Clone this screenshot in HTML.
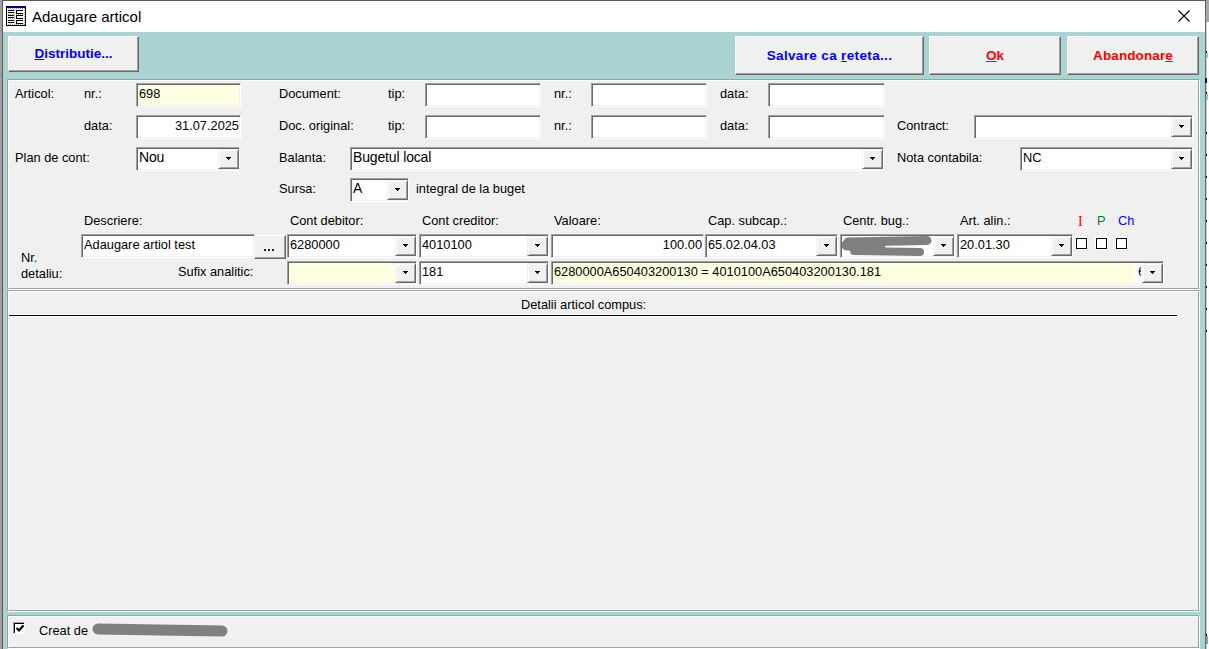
<!DOCTYPE html>
<html><head><meta charset="utf-8">
<style>
*{box-sizing:border-box;margin:0;padding:0}
html,body{width:1209px;height:649px;overflow:hidden}
body{position:relative;background:#f0f0f0;font-family:"Liberation Sans",sans-serif;color:#000}
.a{position:absolute}
.t{position:absolute;font-size:12.8px;line-height:15px;white-space:nowrap}
.ed{position:absolute;background:#fff;border:1px solid;border-color:#a0a0a0 #fff #fff #a0a0a0;box-shadow:inset 1px 1px #696969,inset -1px -1px #f0f0f0;height:24px;overflow:hidden}
.ed .v{position:absolute;left:2px;top:2px;font-size:12.8px;line-height:15px;white-space:nowrap}
.ed .vr{position:absolute;right:1px;top:2px;font-size:12.8px;line-height:15px;white-space:nowrap}
.y{background:#ffffe1}
.ed .vc{font-size:14px;top:2px;letter-spacing:-0.15px}
.bt{position:absolute;right:0;top:1px;bottom:1px;width:21px;background:#f0f0f0;border:1px solid;border-color:#f0f0f0 #696969 #696969 #f0f0f0;box-shadow:inset 1px 1px #fff,inset -1px -1px #a0a0a0}
.bt svg{position:absolute;left:7px;top:7px}
.pb{position:absolute;background:#f0f0f0;border:1px solid;border-color:#fff #696969 #696969 #fff;box-shadow:inset -1px -1px #a0a0a0;font-weight:bold;font-size:13.5px;text-align:center;white-space:nowrap}
.pnl{position:absolute;left:7px;width:1193px;border:1px solid;border-color:#a0a0a0 #fff #fff #a0a0a0;background:#f0f0f0}
.pnl>i{position:absolute;left:0;top:0;right:0;bottom:0;border:1px solid;border-color:#fff #a0a0a0 #a0a0a0 #fff}
.ck{position:absolute;width:13px;height:13px;background:#fff;border:1px solid #fff;box-shadow:inset 0 0 0 1px #000}
u{text-decoration:underline;text-underline-offset:1px;text-decoration-thickness:1px}
</style></head><body>
<!-- window frame -->
<div class="a" style="left:0;top:0;width:1205px;height:649px;background:#a0a0a0"></div>
<div class="a" style="left:2px;top:0;width:1204px;height:649px;background:#5a5a5a"></div>
<div class="a" style="left:3px;top:1px;width:1202px;height:31px;background:#fff"></div>
<div class="a" style="left:3px;top:32px;width:1202px;height:617px;background:#aad4d2"></div>
<div class="a" style="left:1206px;top:0;width:3px;height:22px;background:#a8a8a8"></div>
<div class="a" style="left:1206px;top:22px;width:3px;height:627px;background:#fff"></div><div class="a" style="left:1206px;top:22px;width:1px;height:627px;background:#d0d0d0"></div><div class="a" style="left:1205px;top:14px;width:1px;height:635px;background:#69696f"></div>
<div class="a" style="left:1206px;top:132px;width:1px;height:2px;background:#000"></div><div class="a" style="left:1206px;top:154px;width:1px;height:2px;background:#000"></div><div class="a" style="left:1206px;top:176px;width:1px;height:2px;background:#000"></div><div class="a" style="left:1206px;top:198px;width:1px;height:2px;background:#000"></div><div class="a" style="left:1206px;top:220px;width:1px;height:2px;background:#000"></div><div class="a" style="left:1206px;top:242px;width:1px;height:2px;background:#000"></div><div class="a" style="left:1206px;top:264px;width:1px;height:2px;background:#000"></div><div class="a" style="left:1206px;top:286px;width:1px;height:2px;background:#000"></div><div class="a" style="left:1206px;top:308px;width:1px;height:2px;background:#000"></div><div class="a" style="left:1206px;top:330px;width:1px;height:2px;background:#000"></div><div class="a" style="left:1206px;top:51px;width:1px;height:2px;background:#000"></div><div class="a" style="left:1206px;top:53px;width:2px;height:5px;background:#9cc"></div><div class="a" style="left:1205px;top:78px;width:2px;height:5px;background:#0000c0"></div><div class="a" style="left:1206px;top:92px;width:1px;height:2px;background:#000"></div><div class="a" style="left:1206px;top:94px;width:2px;height:6px;background:#9cc"></div>
<div class="a" style="left:1206px;top:634px;width:1px;height:2px;background:#000"></div><div class="a" style="left:1206px;top:636px;width:2px;height:8px;background:#7aa"></div>
<!-- title -->
<svg class="a" style="left:6px;top:6px" width="20" height="20" viewBox="0 0 20 20" shape-rendering="crispEdges">
<defs><pattern id="dz" width="2" height="2" patternUnits="userSpaceOnUse"><rect width="2" height="2" fill="#fff"/><rect width="1" height="1" fill="#999"/><rect x="1" y="1" width="1" height="1" fill="#e0e0e0"/></pattern></defs>
<rect x="0" y="0" width="20" height="20" fill="#000"/><rect x="1" y="2" width="18" height="17" fill="url(#dz)"/><rect x="0" y="0" width="20" height="2" fill="#000080"/>
<path d="M2 4h6v3H2zM2 9h6v3H2zM2 14h6v3H2zM10 4h7v4h-7zM10 9h7v4h-7zM10 14h7v4h-7z" fill="#fff"/>
<path d="M2 4h6v1H2zM2 6h6v1H2zM2 9h6v1H2zM2 11h6v1H2zM2 14h6v1H2zM2 16h6v1H2zM10 4h7v1h-7zM10 4h1v4h-1zM10 7h7v1h-7zM10 9h7v1h-7zM10 9h1v4h-1zM10 12h7v1h-7zM10 14h7v1h-7zM10 14h1v4h-1zM10 17h7v1h-7z" fill="#000"/>
</svg>
<div class="t" style="left:32px;top:7px;font-size:15px;line-height:20px">Adaugare articol</div>
<svg class="a" style="left:1178px;top:10px" width="12" height="12" viewBox="0 0 12 12"><path d="M0.5 0.5L11.5 11.5M11.5 0.5L0.5 11.5" stroke="#000" stroke-width="1.1"/></svg>
<!-- top buttons -->
<div class="pb" style="left:8px;top:36px;width:131px;height:36px;line-height:34px;color:#0000ff"><u>D</u>istributie...</div>
<div class="pb" style="left:735px;top:36px;width:189px;height:39px;line-height:37px;color:#0000ff;letter-spacing:0.35px">Salvare ca <u>r</u>eteta...</div>
<div class="pb" style="left:929px;top:36px;width:132px;height:39px;line-height:37px;color:#ff0000"><u>O</u>k</div>
<div class="pb" style="left:1067px;top:36px;width:132px;height:39px;line-height:37px;color:#ff0000;letter-spacing:0.1px">Abandonar<u>e</u></div>
<!-- panels -->
<div class="pnl" style="top:79px;height:211px"><i></i></div>
<div class="pnl" style="top:290px;height:322px"><i></i></div>
<div class="pnl" style="top:615px;height:34px"><i></i></div>

<!-- row 1 -->
<div class="t" style="left:15px;top:86px">Articol:</div>
<div class="t" style="left:84px;top:86px">nr.:</div>
<div class="ed y" style="left:136px;top:83px;width:105px"><span class="v">698</span></div>
<div class="t" style="left:279px;top:86px">Document:</div>
<div class="t" style="left:388px;top:86px">tip:</div>
<div class="ed" style="left:425px;top:83px;width:116px"></div>
<div class="t" style="left:554px;top:86px">nr.:</div>
<div class="ed" style="left:591px;top:83px;width:116px"></div>
<div class="t" style="left:720px;top:86px">data:</div>
<div class="ed" style="left:768px;top:83px;width:117px"></div>
<!-- row 2 -->
<div class="t" style="left:84px;top:118px">data:</div>
<div class="ed" style="left:136px;top:115px;width:105px"><span class="vr">31.07.2025</span></div>
<div class="t" style="left:279px;top:118px">Doc. original:</div>
<div class="t" style="left:388px;top:118px">tip:</div>
<div class="ed" style="left:425px;top:115px;width:116px"></div>
<div class="t" style="left:554px;top:118px">nr.:</div>
<div class="ed" style="left:591px;top:115px;width:116px"></div>
<div class="t" style="left:720px;top:118px">data:</div>
<div class="ed" style="left:768px;top:115px;width:117px"></div>
<div class="t" style="left:897px;top:118px">Contract:</div>
<div class="ed" style="left:974px;top:115px;width:219px"><b class="bt"><svg width="5" height="3"><path d="M0 0h5v1H0zM1 1h3v1H1zM2 2h1v1H2z"/></svg></b></div>
<!-- row 3 -->
<div class="t" style="left:15px;top:150px">Plan de cont:</div>
<div class="ed" style="left:136px;top:147px;width:104px"><span class="v vc">Nou</span><b class="bt"><svg width="5" height="3"><path d="M0 0h5v1H0zM1 1h3v1H1zM2 2h1v1H2z"/></svg></b></div>
<div class="t" style="left:279px;top:150px">Balanta:</div>
<div class="ed" style="left:350px;top:147px;width:534px"><span class="v vc">Bugetul local</span><b class="bt"><svg width="5" height="3"><path d="M0 0h5v1H0zM1 1h3v1H1zM2 2h1v1H2z"/></svg></b></div>
<div class="t" style="left:897px;top:150px">Nota contabila:</div>
<div class="ed" style="left:1020px;top:147px;width:173px"><span class="v">NC</span><b class="bt"><svg width="5" height="3"><path d="M0 0h5v1H0zM1 1h3v1H1zM2 2h1v1H2z"/></svg></b></div>
<!-- row 4 -->
<div class="t" style="left:279px;top:181px">Sursa:</div>
<div class="ed" style="left:350px;top:178px;width:59px"><span class="v vc">A</span><b class="bt"><svg width="5" height="3"><path d="M0 0h5v1H0zM1 1h3v1H1zM2 2h1v1H2z"/></svg></b></div>
<div class="t" style="left:416px;top:181px">integral de la buget</div>
<!-- header row -->
<div class="t" style="left:84px;top:213px">Descriere:</div>
<div class="t" style="left:290px;top:213px">Cont debitor:</div>
<div class="t" style="left:422px;top:213px">Cont creditor:</div>
<div class="t" style="left:554px;top:213px">Valoare:</div>
<div class="t" style="left:708px;top:213px">Cap. subcap.:</div>
<div class="t" style="left:843px;top:213px">Centr. bug.:</div>
<div class="t" style="left:960px;top:213px">Art. alin.:</div>
<div class="t" style="left:1078px;top:214px;color:#ff0000;font-family:'Liberation Serif',serif;font-size:14px">I</div>
<div class="t" style="left:1097px;top:213px;color:#008040">P</div>
<div class="t" style="left:1118px;top:213px;color:#0000ff">Ch</div>
<!-- row 6 -->
<div class="t" style="left:21px;top:250px">Nr.</div>
<div class="t" style="left:21px;top:266px">detaliu:</div>
<div class="ed" style="left:81px;top:234px;width:174px;"><span class="v">Adaugare artiol test</span></div>
<div class="pb" style="left:254px;top:235px;width:32px;height:24px"></div><div class="a" style="left:264px;top:249px;width:2px;height:2px;background:#222"></div><div class="a" style="left:268px;top:249px;width:2px;height:2px;background:#222"></div><div class="a" style="left:272px;top:249px;width:2px;height:2px;background:#222"></div>
<div class="ed" style="left:287px;top:234px;width:130px;"><span class="v">6280000</span><b class="bt"><svg width="5" height="3"><path d="M0 0h5v1H0zM1 1h3v1H1zM2 2h1v1H2z"/></svg></b></div>
<div class="ed" style="left:419px;top:234px;width:130px;"><span class="v">4010100</span><b class="bt"><svg width="5" height="3"><path d="M0 0h5v1H0zM1 1h3v1H1zM2 2h1v1H2z"/></svg></b></div>
<div class="ed" style="left:551px;top:234px;width:153px;"><span class="vr">100.00</span></div>
<div class="ed" style="left:705px;top:234px;width:133px;"><span class="v">65.02.04.03</span><b class="bt"><svg width="5" height="3"><path d="M0 0h5v1H0zM1 1h3v1H1zM2 2h1v1H2z"/></svg></b></div>
<div class="ed" style="left:840px;top:234px;width:115px;">
<svg class="a" style="left:-1px;top:-1px" width="100" height="24"><path d="M8 8L87 6.5" stroke="#808080" stroke-width="9" stroke-linecap="round"/><path d="M14 17L80 18" stroke="#808080" stroke-width="8" stroke-linecap="round"/><path d="M7 11L40 13" stroke="#808080" stroke-width="11" stroke-linecap="round"/></svg>
<b class="bt"><svg width="5" height="3"><path d="M0 0h5v1H0zM1 1h3v1H1zM2 2h1v1H2z"/></svg></b></div>
<div class="ed" style="left:957px;top:234px;width:116px;"><span class="v">20.01.30</span><b class="bt"><svg width="5" height="3"><path d="M0 0h5v1H0zM1 1h3v1H1zM2 2h1v1H2z"/></svg></b></div>
<div class="ck" style="left:1075px;top:237px"></div>
<div class="ck" style="left:1095px;top:237px"></div>
<div class="ck" style="left:1115px;top:237px"></div>
<!-- row 7 -->
<div class="t" style="left:178px;top:264px">Sufix analitic:</div>
<div class="ed y" style="left:287px;top:261px;width:130px"><b class="bt"><svg width="5" height="3"><path d="M0 0h5v1H0zM1 1h3v1H1zM2 2h1v1H2z"/></svg></b></div>
<div class="ed" style="left:419px;top:261px;width:130px"><span class="v">181</span><b class="bt"><svg width="5" height="3"><path d="M0 0h5v1H0zM1 1h3v1H1zM2 2h1v1H2z"/></svg></b></div>
<div class="ed" style="left:551px;top:261px;width:613px"><div class="a y" style="left:1px;top:1px;width:582px;height:20px"></div><span class="v">6280000A650403200130 = 4010100A650403200130.181</span><div class="a" style="left:586px;top:2px;width:3px;height:18px;overflow:hidden"><span class="a" style="left:0;top:0;font-size:12.8px;line-height:15px">6</span></div><b class="bt"><svg width="5" height="3"><path d="M0 0h5v1H0zM1 1h3v1H1zM2 2h1v1H2z"/></svg></b></div>
<!-- panel 2 -->
<div class="t" style="left:521px;top:297px">Detalii articol compus:</div>
<div class="a" style="left:9px;top:314px;width:1168px;height:3px;background:#000;border-top:1px solid #fff;border-bottom:1px solid #fff"></div>
<!-- panel 3 -->
<div class="a" style="left:13px;top:622px;width:12px;height:12px;background:#fff;border-top:1px solid #a0a0a0;border-left:1px solid #a0a0a0;border-right:1px solid #fff;border-bottom:1px solid #fff;box-shadow:inset 1px 1px #000"></div>
<svg class="a" style="left:15px;top:624px" width="10" height="10"><path d="M1.5 4L4 6.5L8.5 1.5" stroke="#000" stroke-width="2.2" fill="none"/></svg>
<div class="t" style="left:39px;top:623px">Creat de</div>
<svg class="a" style="left:85px;top:615px" width="150" height="30"><path d="M13 14L137 16" stroke="#808080" stroke-width="11" stroke-linecap="round"/></svg>
</body></html>
